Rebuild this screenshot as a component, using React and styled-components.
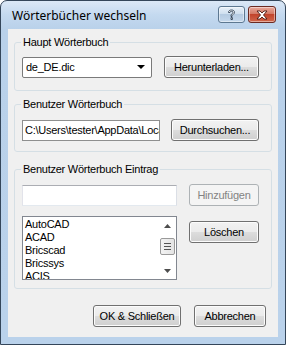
import React from "react";
import styled, { createGlobalStyle } from "styled-components";

const GlobalStyle = createGlobalStyle`
  html, body {
    margin: 0;
    padding: 0;
    background: #ffffff;
  }
  body {
    font-family: "Liberation Sans", Arial, sans-serif;
    font-size: 11px;
    letter-spacing: -0.25px;
  }
`;

const Window = styled.div`
  width: 286px;
  height: 345px;
  box-sizing: border-box;
  border: 1px solid #34465a;
  border-radius: 7px 7px 0 0;
  background: linear-gradient(
    to bottom,
    #dbe8f6 0px,
    #c4d9ef 14px,
    #b9d1ea 28px,
    #bad2eb 100%
  );
  display: flex;
  flex-direction: column;
  overflow: hidden;
`;

const TitleBar = styled.div`
  height: 28px;
  flex: none;
  display: flex;
  align-items: flex-start;
  padding: 0 9px 0 11px;
`;

const Title = styled.div`
  font-family: "Noto Sans", "Open Sans", sans-serif;
  font-size: 12px;
  letter-spacing: 0;
  line-height: 16px;
  margin-top: 7px;
  color: #000;
`;

const CaptionButtons = styled.div`
  margin-left: auto;
  margin-top: 5px;
  display: flex;
  gap: 3px;
`;

const CaptionButton = styled.div`
  width: ${(p) => p.$w}px;
  height: 17px;
  box-sizing: border-box;
  border: 1px solid ${(p) => (p.$close ? "#6b2a22" : "#5d7891")};
  border-radius: 3px;
  display: flex;
  align-items: center;
  justify-content: center;
  background: ${(p) =>
    p.$close
      ? "linear-gradient(to bottom, #e9a99b 0%, #d47a66 45%, #c2442c 50%, #d0674c 100%)"
      : "linear-gradient(to bottom, #e9f1f9 0%, #cfdfef 45%, #b5cbe2 50%, #c5d8ec 100%)"};
  box-shadow: inset 0 0 0 1px rgba(255, 255, 255, 0.45);
`;

const Client = styled.div`
  flex: 1;
  margin: 0 7px 7px 7px;
  background: #f0f0f0;
  display: flex;
  flex-direction: column;
  padding: 7px 6px 0 6px;
`;

const Group = styled.fieldset`
  margin: 0 0 ${(p) => p.$gap || 0}px 0;
  border: 1px solid #d5dfe5;
  border-radius: 3px;
  padding: 2px 12px ${(p) => p.$pb || 10}px 7px;
  min-width: 0;
`;

const Legend = styled.legend`
  padding: 0 2px;
  margin-left: -1px;
  line-height: 13px;
  color: #000;
`;

const Row = styled.div`
  display: flex;
  justify-content: space-between;
  align-items: ${(p) => (p.$top ? "flex-start" : "center")};
  margin-top: ${(p) => p.$mt || 0}px;
`;

const Button = styled.div`
  width: ${(p) => p.$w}px;
  height: 22px;
  box-sizing: border-box;
  border: 1px solid ${(p) => (p.$disabled ? "#adb2b5" : "#707070")};
  border-radius: 3px;
  display: flex;
  align-items: center;
  justify-content: center;
  color: ${(p) => (p.$disabled ? "#838383" : "#000")};
  background: ${(p) =>
    p.$disabled
      ? "#f4f4f4"
      : "linear-gradient(to bottom, #f2f2f2 0%, #ebebeb 50%, #dddddd 50%, #cfcfcf 100%)"};
  box-shadow: inset 0 0 0 1px ${(p) => (p.$disabled ? "#f4f4f4" : "#fcfcfc")};
  margin-top: ${(p) => p.$mt || 0}px;
  white-space: nowrap;
`;

const Combo = styled.div`
  width: ${(p) => p.$w}px;
  height: 21px;
  box-sizing: border-box;
  border: 1px solid #7a7a7a;
  border-radius: 2px;
  background: #fff;
  display: flex;
  align-items: center;
  padding: 0 6px 0 3px;
`;

const ComboText = styled.span`
  flex: 1;
`;

const Arrow = styled.span`
  width: 0;
  height: 0;
  border-left: 4px solid transparent;
  border-right: 4px solid transparent;
  border-top: 4px solid #000;
`;

const TextBox = styled.div`
  width: ${(p) => p.$w}px;
  height: 21px;
  box-sizing: border-box;
  border: 1px solid #abadb3;
  border-color: ${(p) => (p.$dark ? "#8e8f8f" : "#abadb3 #dbdfe6 #e3e9ef #e2e3ea")};
  background: #fff;
  display: flex;
  align-items: center;
  padding-left: 2px;
  overflow: hidden;
  white-space: nowrap;
`;

const ListBox = styled.div`
  width: ${(p) => p.$w}px;
  height: 64px;
  box-sizing: border-box;
  border: 1px solid #828790;
  background: #fff;
  display: flex;
`;

const Items = styled.div`
  flex: 1;
  overflow: hidden;
  padding: 1px 0 0 2px;
`;

const Item = styled.div`
  line-height: 13px;
  height: 13px;
  white-space: nowrap;
`;

const ScrollBar = styled.div`
  width: 17px;
  flex: none;
  display: flex;
  flex-direction: column;
  align-items: center;
  background: #fff;
`;

const ScrollArrow = styled.div`
  height: 17px;
  display: flex;
  align-items: center;
  justify-content: center;
`;

const ScrollTrack = styled.div`
  flex: 1;
  width: 100%;
  padding-top: 4px;
`;

const Thumb = styled.div`
  width: 15px;
  height: 17px;
  margin: 0 auto;
  box-sizing: border-box;
  border: 1px solid #9a9a9a;
  border-radius: 2px;
  background: linear-gradient(to right, #f3f3f3, #e4e4e4);
  display: flex;
  flex-direction: column;
  align-items: center;
  justify-content: center;
  gap: 2px;
`;

const Grip = styled.span`
  width: 7px;
  height: 1px;
  background: #555;
`;

const Footer = styled.div`
  margin-top: auto;
  display: flex;
  justify-content: flex-end;
  gap: 13px;
  padding: 0 6px 10px 0;
`;

const words = ["AutoCAD", "ACAD", "Bricscad", "Bricssys", "ACIS"];

const SmallArrow = ({ up }) => (
  <svg width="7" height="4" viewBox="0 0 7 4">
    <path d={up ? "M0 4 L3.5 0 L7 4 Z" : "M0 0 L3.5 4 L7 0 Z"} fill="#4d4d4d" />
  </svg>
);

export default function App() {
  return (
    <>
      <GlobalStyle />
      <Window>
        <TitleBar>
          <Title>Wörterbücher wechseln</Title>
          <CaptionButtons>
            <CaptionButton $w={27}>
              <svg width="9" height="12" viewBox="0 0 9 12">
                <path
                  d="M1.5 3.5 C1.5 1.5 3 1 4.5 1 C6.5 1 7.5 2 7.5 3.5 C7.5 5 5.5 5.5 5 6.5 L5 7.5 L4 7.5 L4 6.3 C4 5 6 4.5 6 3.5 C6 2.7 5.4 2.3 4.5 2.3 C3.5 2.3 3 2.8 3 3.5 Z M4 8.6 H5.4 V10.5 H4 Z"
                  fill="#fff"
                  stroke="#2d3e52"
                  strokeWidth="0.9"
                />
              </svg>
            </CaptionButton>
            <CaptionButton $w={28} $close>
              <svg width="12" height="10" viewBox="0 0 12 10">
                <path
                  d="M1 1 L4 1 L6 3 L8 1 L11 1 L7.5 5 L11 9 L8 9 L6 7 L4 9 L1 9 L4.5 5 Z"
                  fill="#fff"
                  stroke="#4a1a12"
                  strokeWidth="0.9"
                />
              </svg>
            </CaptionButton>
          </CaptionButtons>
        </TitleBar>
        <Client>
          <Group $gap={7} $pb={12}>
            <Legend>Haupt Wörterbuch</Legend>
            <Row $mt={5}>
              <Combo $w={130}>
                <ComboText>de_DE.dic</ComboText>
                <Arrow />
              </Combo>
              <Button $w={95}>Herunterladen...</Button>
            </Row>
          </Group>
          <Group $gap={11}>
            <Legend>Benutzer Wörterbuch</Legend>
            <Row $mt={6}>
              <TextBox $w={138} $dark>
                C:\Users\tester\AppData\Local
              </TextBox>
              <Button $w={88}>Durchsuchen...</Button>
            </Row>
          </Group>
          <Group $pb={8}>
            <Legend>Benutzer Wörterbuch Eintrag</Legend>
            <Row $mt={6}>
              <TextBox $w={155} />
              <Button $w={70} $disabled>
                Hinzufügen
              </Button>
            </Row>
            <Row $top $mt={10}>
              <ListBox $w={155}>
                <Items>
                  {words.map((w) => (
                    <Item key={w}>{w}</Item>
                  ))}
                </Items>
                <ScrollBar>
                  <ScrollArrow>
                    <SmallArrow up />
                  </ScrollArrow>
                  <ScrollTrack>
                    <Thumb>
                      <Grip />
                      <Grip />
                      <Grip />
                    </Thumb>
                  </ScrollTrack>
                  <ScrollArrow>
                    <SmallArrow />
                  </ScrollArrow>
                </ScrollBar>
              </ListBox>
              <Button $w={70} $mt={5}>
                Löschen
              </Button>
            </Row>
          </Group>
          <Footer>
            <Button $w={88}>OK &amp; Schließen</Button>
            <Button $w={72}>Abbrechen</Button>
          </Footer>
        </Client>
      </Window>
    </>
  );
}
